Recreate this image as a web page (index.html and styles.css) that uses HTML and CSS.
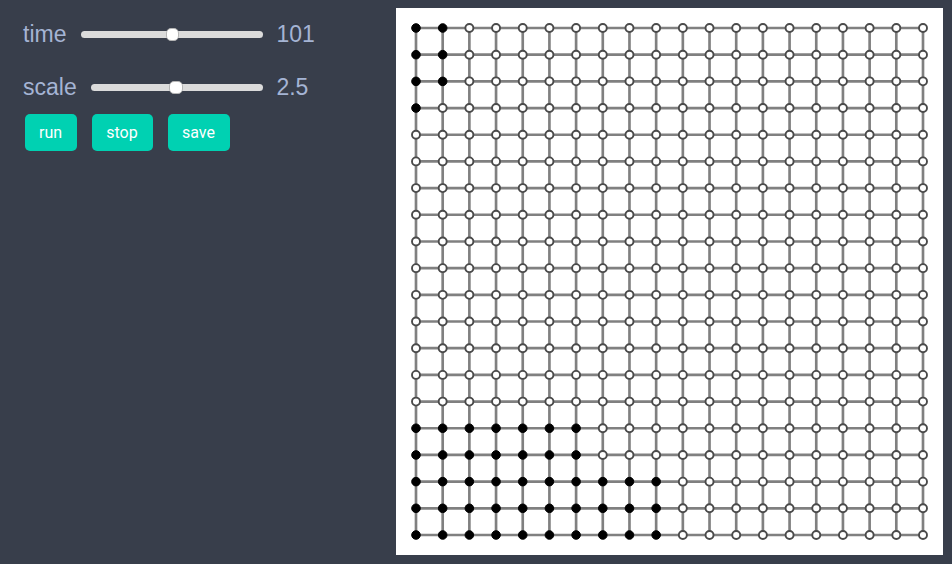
FILE: index.html
```html
<!DOCTYPE html>
<html lang="en">
<head>
<meta charset="utf-8">
<title>Lattice</title>
<link rel="stylesheet" href="styles.css">
</head>
<body>
<main class="app">
  <section class="panel">
    <div class="control">
      <span class="label label-time">time</span>
      <div class="track"><div class="thumb"></div></div>
      <span class="value">101</span>
    </div>
    <div class="control">
      <span class="label">scale</span>
      <div class="track"><div class="thumb thumb-wide"></div></div>
      <span class="value">2.5</span>
    </div>
    <div class="buttons">
      <button class="run">run</button>
      <button class="stop">stop</button>
      <button class="save">save</button>
    </div>
  </section>
  <svg class="board" id="board" width="547" height="547" viewBox="0 0 547 547"></svg>
</main>
<script src="grid.js"></script>
</body>
</html>
```
FILE: styles.css
```css
* { box-sizing: border-box; }

body {
  margin: 0;
  background: #383e4b;
  font-family: "Liberation Sans", Arial, sans-serif;
}

.app {
  display: flex;
  height: 564px;
  padding-top: 8px;
}

.panel {
  width: 396px;
  padding-left: 23px;
}

.control {
  display: flex;
  align-items: center;
  width: 296px;
  height: 53px;
  color: #a5b4d4;
  font-size: 23px;
  line-height: 27px;
}

.label { margin-right: 14px; }
.label-time { margin-right: 15px; }

.value {
  width: 56px;
  padding-left: 13.4px;
}

.track {
  display: flex;
  flex: 1;
  align-items: center;
  justify-content: center;
  height: 7px;
  border-radius: 4px;
  background: #dbdbdb;
}

.thumb {
  width: 13px;
  height: 13px;
  border: 1px solid #b5b5b5;
  border-radius: 5px;
  background: #fff;
}

.thumb-wide {
  width: 14px;
  margin-right: 2px;
}

.buttons {
  display: flex;
  gap: 15px;
  padding-left: 2px;
}

button {
  height: 37px;
  padding: 0 1px 0 0;
  border: 0;
  border-radius: 5px;
  background: #00d1b2;
  color: #fff;
  font: 16px/37px Roboto, sans-serif;
}

.run { width: 52px; }
.stop { width: 61px; }
.save { width: 62px; }

.board { background: #fff; }

.edge {
  stroke: #808080;
  stroke-width: 2.67;
}

.node {
  fill: #fff;
  stroke: #4a4a4a;
  stroke-width: 1.9;
}

.node-on {
  fill: #000;
  stroke: #000;
  stroke-width: 1;
}
```
FILE: grid.js
```js
const board = document.getElementById("board");
const size = 20;
const start = 20;
const step = 26.684;
const end = start + step * (size - 1);
// number of filled nodes at the left of each row
const filled = [2, 2, 2, 1, 0, 0, 0, 0, 0, 0, 0, 0, 0, 0, 0, 7, 7, 10, 10, 10];

function add(tag, attrs) {
  const el = document.createElementNS("http://www.w3.org/2000/svg", tag);
  for (const key in attrs) el.setAttribute(key, attrs[key]);
  board.appendChild(el);
}

for (let i = 0; i < size; i++) {
  const p = start + i * step;
  add("line", { class: "edge", x1: p, y1: start, x2: p, y2: end });
  add("line", { class: "edge", x1: start, y1: p, x2: end, y2: p });
}
for (let row = 0; row < size; row++) {
  for (let col = 0; col < size; col++) {
    const on = col < filled[row];
    add("circle", {
      class: on ? "node node-on" : "node",
      cx: start + col * step,
      cy: start + row * step,
      r: on ? 4.3 : 4
    });
  }
}
```
